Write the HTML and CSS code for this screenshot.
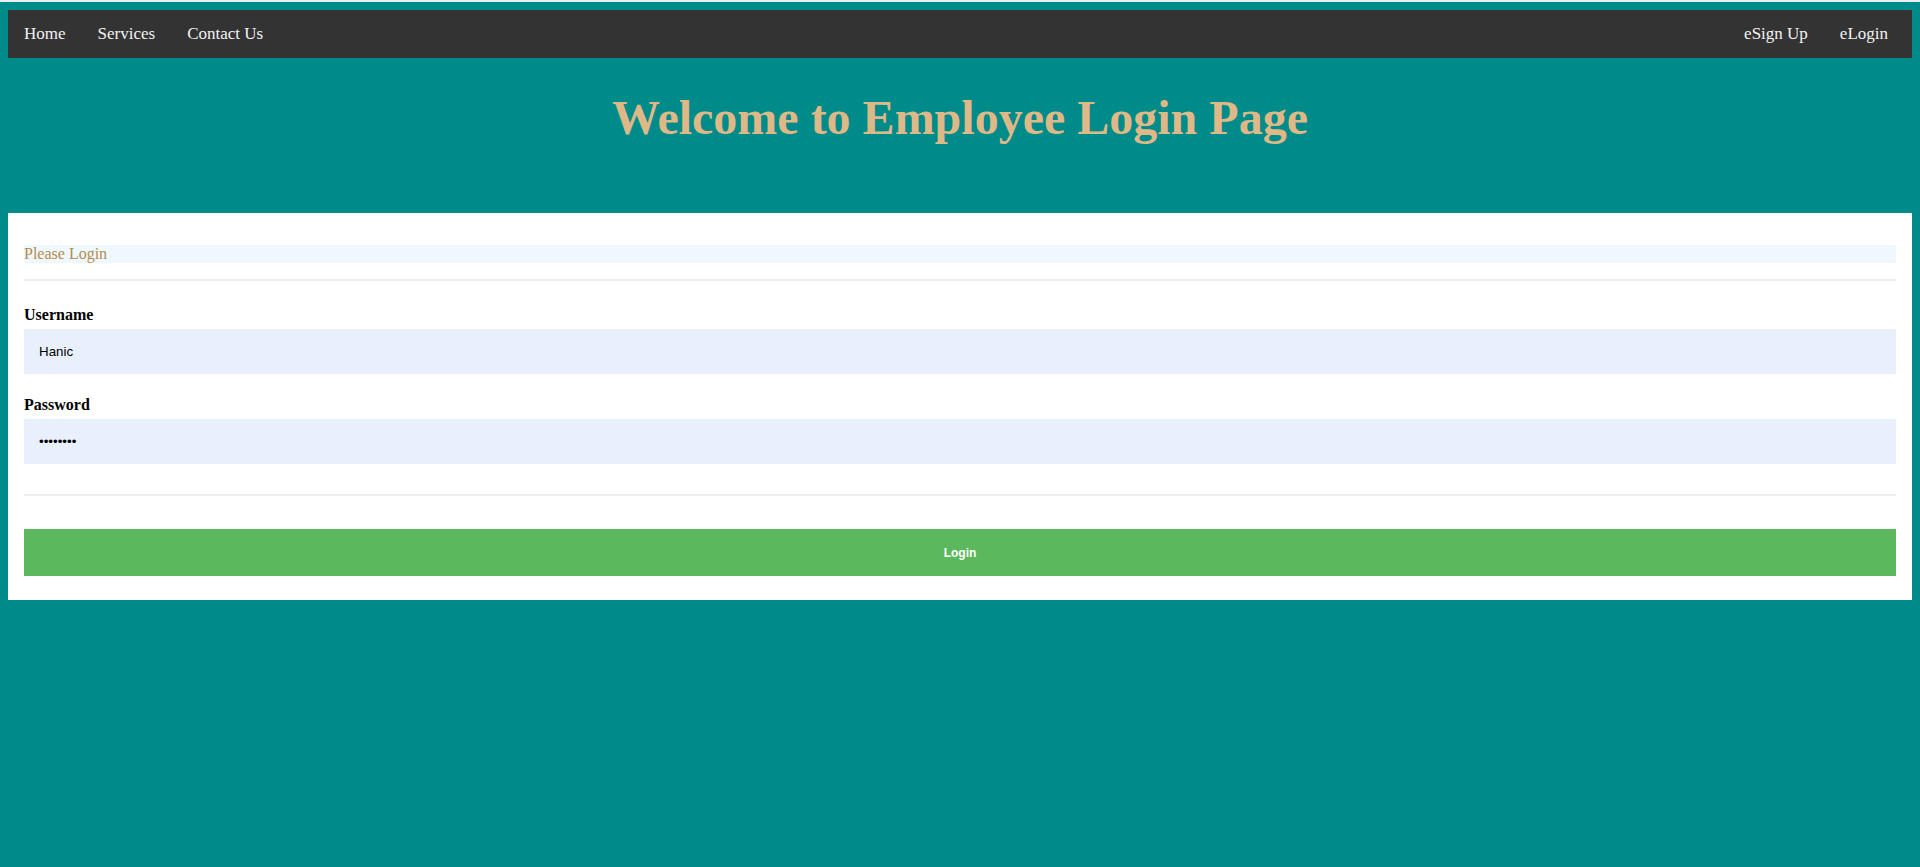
FILE: index.html
```html
<!DOCTYPE html>
<html lang="en">
<head>
<meta charset="utf-8">
<title>Employee Login</title>
<link rel="stylesheet" href="styles.css">
</head>
<body>
<nav class="topnav">
  <div class="nav-left">
    <a href="#">Home</a>
    <a href="#">Services</a>
    <a href="#">Contact Us</a>
  </div>
  <div class="nav-right">
    <a href="#">eSign Up</a>
    <a href="#">eLogin</a>
  </div>
</nav>
<h1 class="title">Welcome to Employee Login Page</h1>
<div class="panel">
  <div class="panel-heading">Please Login</div>
  <hr class="divider">
  <form class="login-form">
    <label class="field-label first" for="username">Username</label>
    <input class="field" id="username" type="text" value="Hanic">
    <label class="field-label" for="password">Password</label>
    <input class="field" id="password" type="password" value="12345678">
    <hr class="divider second">
    <button class="btn-login" type="button">Login</button>
  </form>
</div>
</body>
</html>
```

FILE: styles.css
```css
html {
  border-top: 2px solid #e6f0f0;
}
body {
  margin: 8px 8px 8px;
  background: #008b8b;
  font-family: "Liberation Serif", "Times New Roman", serif;
}
.topnav {
  display: flex;
  justify-content: space-between;
  background: #333333;
}
.nav-left, .nav-right {
  display: flex;
}
.nav-right {
  margin-right: 8px;
}
.topnav a {
  display: block;
  color: #f2f2f2;
  text-decoration: none;
  font-size: 17px;
  line-height: 20px;
  padding: 14px 16px;
}
.title {
  margin: 33px 0 69px;
  text-align: center;
  color: #deb887;
  font-size: 48px;
  line-height: 53px;
  font-weight: bold;
}
.panel {
  background: #ffffff;
  padding: 32px 16px 24px;
}
.panel-heading {
  background: #f0f8ff;
  color: #b58a4c;
  font-size: 16px;
  line-height: 18px;
}
.divider {
  margin: 16px 0 0;
  border: 0;
  border-top: 2px solid #eeeeee;
  height: 0;
}
.login-form {
  display: flex;
  flex-direction: column;
  margin: 0;
}
.field-label {
  display: block;
  margin-top: 22px;
  font-weight: bold;
  font-size: 16px;
  line-height: 18px;
  color: #000;
}
.field-label.first {
  margin-top: 25px;
}
.field {
  margin: 5px 0 0;
  box-sizing: border-box;
  height: 45px;
  width: 100%;
  padding: 0 15px;
  border: 0;
  background: #e8f0fe;
  color: #000;
  font-family: "Liberation Sans", Arial, sans-serif;
  font-size: 13.33px;
  outline: none;
}
.divider.second {
  margin-top: 30px;
}
.btn-login {
  margin-top: 33px;
  height: 47px;
  width: 100%;
  background: #5cb85c;
  border: 1px solid #5cb85c;
  color: #fff;
  font-family: "Liberation Sans", Arial, sans-serif;
  font-weight: bold;
  font-size: 12px;
  cursor: pointer;
}
```
